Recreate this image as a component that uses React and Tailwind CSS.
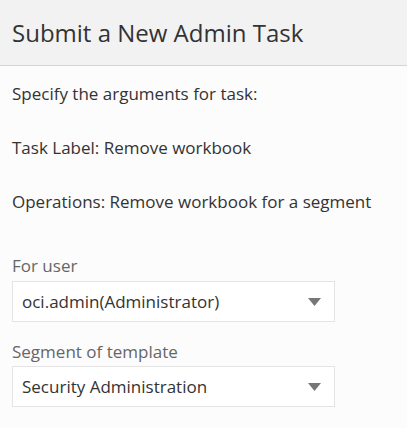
export default function App() {
  const font = { fontFamily: '"Open Sans", "Noto Sans", sans-serif' };

  return (
    <div className="w-[407px] h-[428px] bg-[#fcfcfc] text-[#333]" style={font}>
      <div className="h-[66px] bg-[#f2f2f2] border-b border-[#d4d4d4] flex items-center px-3">
        <h1 className="text-[24px] leading-none text-[#333]">Submit a New Admin Task</h1>
      </div>

      <div className="px-3 pt-[17px]">
        <p className="text-[17px] leading-[22px]">Specify the arguments for task:</p>
        <p className="text-[17px] leading-[22px] mt-[32px]">Task Label: Remove workbook</p>
        <p className="text-[17px] leading-[22px] mt-[32px]">Operations: Remove workbook for a segment</p>

        <div className="mt-[42px]">
          <label className="block text-[17px] leading-[22px] text-[#666]">For user</label>
          <div className="mt-[4px] w-[323px] h-[41px] border border-[#e4e4e4] bg-white flex items-center justify-between pl-[9px] pr-[13px]">
            <span className="text-[17px] text-[#333]">oci.admin(Administrator)</span>
            <svg width="13" height="8" viewBox="0 0 13 8"><path d="M0 0h13L6.5 8z" fill="#777" /></svg>
          </div>
        </div>

        <div className="mt-[19px]">
          <label className="block text-[17px] leading-[22px] text-[#666]">Segment of template</label>
          <div className="mt-[3px] w-[323px] h-[41px] border border-[#e4e4e4] bg-white flex items-center justify-between pl-[9px] pr-[13px]">
            <span className="text-[17px] text-[#333]">Security Administration</span>
            <svg width="13" height="8" viewBox="0 0 13 8"><path d="M0 0h13L6.5 8z" fill="#777" /></svg>
          </div>
        </div>
      </div>
    </div>
  );
}
